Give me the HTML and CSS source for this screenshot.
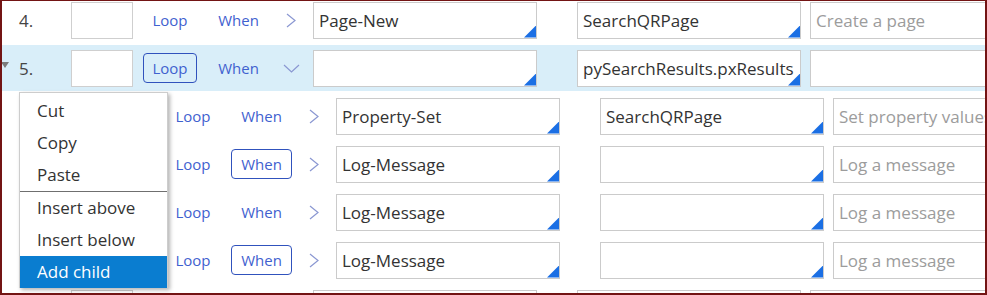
FILE: index.html
```html
<!DOCTYPE html>
<html lang="en">
  <head>
    <meta charset="UTF-8" />
    <title>Steps</title>
    <link rel="stylesheet" href="styles.css">
  </head>
  <body>
    <div class="frame">
      <div class="rows">
        <div class="row">
          <span class="toggle"></span>
          <span class="num">4.</span>
          <span class="box"></span>
          <span class="act loop">Loop</span>
          <span class="act when">When</span>
          <span class="chev">
            <svg width="10" height="15" viewBox="0 0 10 15"><polyline points="1,1 9,7.5 1,14" /></svg>
          </span>
          <div class="field method">Page-New</div>
          <div class="field step">SearchQRPage</div>
          <div class="field desc empty">Create a page</div>
        </div>

        <div class="row current">
          <span class="toggle"><svg width="8" height="6" viewBox="0 0 8 6"><polygon points="0,0 8,0 4,6" /></svg></span>
          <span class="num">5.</span>
          <span class="box"></span>
          <span class="act loop on">Loop</span>
          <span class="act when">When</span>
          <span class="chev">
            <svg width="17" height="9" viewBox="0 0 17 9"><polyline points="1,1 8.5,8 16,1" /></svg>
          </span>
          <div class="field method"></div>
          <div class="field step">pySearchResults.pxResults</div>
          <div class="field desc"></div>
        </div>

        <!-- child steps: numbers sit under the open menu -->
        <div class="row child">
          <span class="toggle"></span>
          <span class="num"></span>
          <span class="box"></span>
          <span class="act loop">Loop</span>
          <span class="act when">When</span>
          <span class="chev">
            <svg width="10" height="15" viewBox="0 0 10 15"><polyline points="1,1 9,7.5 1,14" /></svg>
          </span>
          <div class="field method">Property-Set</div>
          <div class="field step">SearchQRPage</div>
          <div class="field desc empty">Set property values</div>
        </div>

        <div class="row child">
          <span class="toggle"></span>
          <span class="num"></span>
          <span class="box"></span>
          <span class="act loop">Loop</span>
          <span class="act when on">When</span>
          <span class="chev">
            <svg width="10" height="15" viewBox="0 0 10 15"><polyline points="1,1 9,7.5 1,14" /></svg>
          </span>
          <div class="field method">Log-Message</div>
          <div class="field step"></div>
          <div class="field desc empty">Log a message</div>
        </div>

        <div class="row child">
          <span class="toggle"></span>
          <span class="num"></span>
          <span class="box"></span>
          <span class="act loop">Loop</span>
          <span class="act when">When</span>
          <span class="chev">
            <svg width="10" height="15" viewBox="0 0 10 15"><polyline points="1,1 9,7.5 1,14" /></svg>
          </span>
          <div class="field method">Log-Message</div>
          <div class="field step"></div>
          <div class="field desc empty">Log a message</div>
        </div>

        <div class="row child">
          <span class="toggle"></span>
          <span class="num"></span>
          <span class="box"></span>
          <span class="act loop">Loop</span>
          <span class="act when on">When</span>
          <span class="chev">
            <svg width="10" height="15" viewBox="0 0 10 15"><polyline points="1,1 9,7.5 1,14" /></svg>
          </span>
          <div class="field method">Log-Message</div>
          <div class="field step"></div>
          <div class="field desc empty">Log a message</div>
        </div>

        <div class="row">
          <span class="toggle"></span>
          <span class="num"></span>
          <span class="box"></span>
          <span class="act loop"></span>
          <span class="act when"></span>
          <span class="chev"></span>
          <div class="field method"></div>
          <div class="field step"></div>
          <div class="field desc"></div>
        </div>
      </div>

      <!-- right-click menu for step 5 -->
      <ul class="menu">
        <li>Cut</li>
        <li>Copy</li>
        <li class="sep">Paste</li>
        <li>Insert above</li>
        <li>Insert below</li>
        <li class="active">Add child</li>
      </ul>
    </div>
  </body>
</html>
```

FILE: styles.css
```css
body {
  margin: 0;
  font-family: "Open Sans", "Liberation Sans", sans-serif;
  color: #333;
}
.frame {
  position: relative;
  width: 987px;
  height: 295px;
  box-sizing: border-box;
  border: 2px solid #731414;
  border-top-width: 1px;
  overflow: hidden;
  background: #fff;
}
.rows {
  margin-top: -4px;
}
.row {
  display: flex;
  align-items: center;
  height: 46px;
  margin-bottom: 2px;
  white-space: nowrap;
}
.row.current {
  background-color: #d9eef9;
}
.row.child {
  padding-left: 23px;
}
.toggle {
  display: flex;
  align-items: center;
  width: 17px;
  flex: none;
}
.toggle svg {
  fill: #7b7b7b;
  margin-top: -6px;
  margin-left: -1px;
}
.num {
  width: 52px;
  flex: none;
  font-size: 17px;
  color: #444;
}
.box {
  width: 62px;
  height: 37px;
  box-sizing: border-box;
  border: 1px solid #cfcfcf;
  background: #fff;
  flex: none;
}
.act {
  flex: none;
  height: 30px;
  box-sizing: border-box;
  border: 1px solid transparent;
  border-radius: 4px;
  font-size: 15px;
  line-height: 28px;
  text-align: center;
  color: #3f61cf;
}
.act.on {
  border-color: #3052bd;
}
.act.loop {
  width: 54px;
  margin-left: 10px;
}
.act.when {
  width: 61px;
  margin-left: 11px;
}
.chev {
  width: 44px;
  flex: none;
  display: flex;
  justify-content: center;
  align-items: center;
}
.chev svg {
  fill: none;
  stroke: #8a97d2;
  stroke-width: 1.2;
}
.field {
  position: relative;
  flex: none;
  width: 224px;
  height: 37px;
  box-sizing: border-box;
  border: 1px solid #cbcbcb;
  background: #fff;
  padding-left: 5px;
  font-size: 17px;
  line-height: 35px;
  overflow: hidden;
  color: #333;
}
.field.method::after,
.field.step::after {
  content: "";
  position: absolute;
  right: 0;
  bottom: 0;
  width: 12px;
  height: 12px;
  background: #1b6fe4;
  clip-path: polygon(100% 0, 100% 100%, 0 100%);
}
.row:last-child .field::after {
  display: none;
}
.field.step {
  margin-left: 40px;
  padding-right: 2px;
}
.field.desc {
  margin-left: 9px;
}
.field.empty {
  color: #9c9c9c;
}
.menu {
  position: absolute;
  left: 17px;
  top: 91px;
  width: 149px;
  margin: 0;
  padding: 2px 0 0;
  box-sizing: border-box;
  list-style: none;
  background: #fff;
  border: 1px solid #cdcdcd;
  border-bottom: none;
  box-shadow: 2px 2px 4px rgba(0, 0, 0, 0.3);
}
.menu li {
  height: 32px;
  line-height: 32px;
  padding-left: 17px;
  font-size: 17px;
  color: #333;
}
.menu li.sep {
  border-bottom: 1px solid #6f6f6f;
}
.menu li.active {
  background-color: #0a7dd0;
  color: #fff;
}
```
